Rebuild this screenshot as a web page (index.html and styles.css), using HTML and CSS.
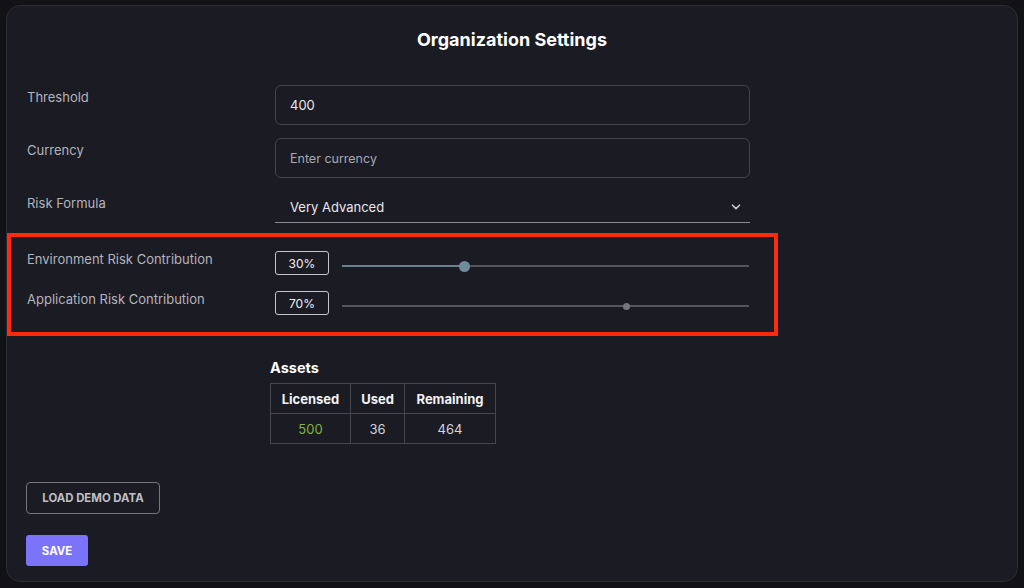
FILE: index.html
```html
<!DOCTYPE html>
<html lang="en">
<head>
<meta charset="utf-8">
<title>Organization Settings</title>
<link rel="stylesheet" href="styles.css">
</head>
<body>
<div class="card">
  <h1 class="title">Organization Settings</h1>

  <div class="form-row">
    <label class="label">Threshold</label>
    <div class="input">400</div>
  </div>
  <div class="form-row">
    <label class="label">Currency</label>
    <div class="input placeholder">Enter currency</div>
  </div>
  <div class="form-row">
    <label class="label">Risk Formula</label>
    <div class="select">
      <span>Very Advanced</span>
      <svg class="chevron" width="10" height="6" viewBox="0 0 10 6"><path d="M1.5 1.2 L5 4.6 L8.5 1.2" fill="none" stroke="#c9c9d0" stroke-width="1.6" stroke-linecap="round" stroke-linejoin="round"/></svg>
    </div>
  </div>

  <div class="highlight">
    <div class="slider-row">
      <span class="label">Environment Risk Contribution</span>
      <div class="pct">30%</div>
      <div class="slider active">
        <div class="track"></div>
        <div class="fill" style="width:30%"></div>
        <div class="thumb" style="left:30%"></div>
      </div>
    </div>
    <div class="slider-row">
      <span class="label">Application Risk Contribution</span>
      <div class="pct">70%</div>
      <div class="slider">
        <div class="track"></div>
        <div class="thumb small" style="left:70%"></div>
      </div>
    </div>
  </div>

  <div class="assets">
    <h2 class="assets-title">Assets</h2>
    <table class="assets-table">
      <tr><th class="c1">Licensed</th><th class="c2">Used</th><th class="c3">Remaining</th></tr>
      <tr><td class="green">500</td><td>36</td><td>464</td></tr>
    </table>
  </div>

  <button class="btn-outline">LOAD DEMO DATA</button>
  <button class="btn-primary">SAVE</button>
</div>
</body>
</html>
```

FILE: styles.css
```css
* { box-sizing: border-box; }
html, body { margin: 0; padding: 0; }
body {
  background: #111116;
  font-family: Inter, "Noto Sans", "Liberation Sans", sans-serif;
  color: #e6e6ea;
  width: 1024px;
  height: 588px;
  overflow: hidden;
  padding: 5px 6px 0 6px;
}
.card {
  width: 1012px;
  height: 577px;
  background: #1b1b23;
  border: 1px solid #2b2b33;
  border-radius: 14px;
  padding: 22px 19px 0 19px;
  display: flex;
  flex-direction: column;
  align-items: flex-start;
}
.title {
  align-self: stretch;
  text-align: center;
  margin: 0 0 33px 0;
  font-size: 18px;
  line-height: 24px;
  font-weight: 700;
  color: #ffffff;
}
.form-row {
  display: grid;
  grid-template-columns: 249px 475px;
  margin-bottom: 13px;
}
.label {
  font-size: 13px;
  line-height: 16px;
  color: #b4b4bc;
  padding: 4px 0 0 1px;
}
.input {
  height: 40px;
  border: 1px solid #44444e;
  border-radius: 6px;
  padding: 0 14px;
  display: flex;
  align-items: center;
  font-size: 13px;
  color: #e8e8ec;
}
.input.placeholder { color: #a8a8b0; font-size: 12.5px; }
.select {
  height: 32px;
  border-bottom: 1px solid #8a8a92;
  display: flex;
  align-items: center;
  justify-content: space-between;
  padding: 0 9px 0 15px;
  font-size: 13px;
  color: #e8e8ec;
}
.chevron { margin-top: 1px; }
.form-row:nth-of-type(3) { margin-bottom: 10px; }
.highlight {
  margin-left: -19px;
  width: 771px;
  border: 4px solid #ff2a0a;
  padding: 14px 0 17px 15px;
  display: flex;
  flex-direction: column;
  gap: 16px;
}
.slider-row {
  display: flex;
  align-items: flex-start;
}
.slider-row .label {
  width: 249px;
  padding-top: 0;
}
.pct {
  width: 54px;
  height: 24px;
  border: 1px solid #c4c4cc;
  border-radius: 3px;
  display: flex;
  align-items: center;
  justify-content: center;
  font-size: 12px;
  color: #f0f0f4;
}
.slider {
  position: relative;
  margin-left: 13px;
  width: 407px;
  height: 24px;
}
.track {
  position: absolute;
  left: 0; right: 0; top: 14px;
  height: 2px;
  background: #55555e;
}
.fill {
  position: absolute;
  left: 0; top: 14px;
  height: 2px;
  background: #67838f;
}
.thumb {
  position: absolute;
  top: 15px;
  width: 11px;
  height: 11px;
  margin: -5.5px 0 0 -5.5px;
  border-radius: 50%;
  background: #6f8c9a;
}
.thumb.small {
  width: 7px;
  height: 7px;
  margin: -3.5px 0 0 -3.5px;
  background: #75757d;
}
.assets {
  margin: 23px 0 0 244px;
}
.assets-title {
  margin: 0 0 6px 0;
  font-size: 14.5px;
  line-height: 18px;
  font-weight: 700;
  color: #ffffff;
}
.assets-table {
  border-collapse: collapse;
  font-size: 13px;
}
.assets-table th, .assets-table td {
  border: 1px solid #46464e;
  height: 30px;
  padding: 0;
  text-align: center;
}
.assets-table th { color: #f2f2f6; font-weight: 700; }
.assets-table td { color: #d4d4da; }
.assets-table .c1 { width: 80px; }
.assets-table .c2 { width: 54px; }
.assets-table .c3 { width: 91px; }
.assets-table td.green { color: #7fb241; }
button {
  font-family: Inter, "Noto Sans", "Liberation Sans", sans-serif;
  font-weight: 700;
  font-size: 11.4px;
  cursor: pointer;
}
.btn-outline {
  margin-top: 38px;
  width: 134px;
  height: 32px;
  background: transparent;
  border: 1px solid #75757d;
  border-radius: 4px;
  color: #bfbfc6;
  padding: 0;
}
.btn-primary {
  margin-top: 21px;
  width: 62px;
  height: 31px;
  background: #7b74fb;
  border: none;
  border-radius: 3px;
  color: #ffffff;
  padding: 0;
}
```
